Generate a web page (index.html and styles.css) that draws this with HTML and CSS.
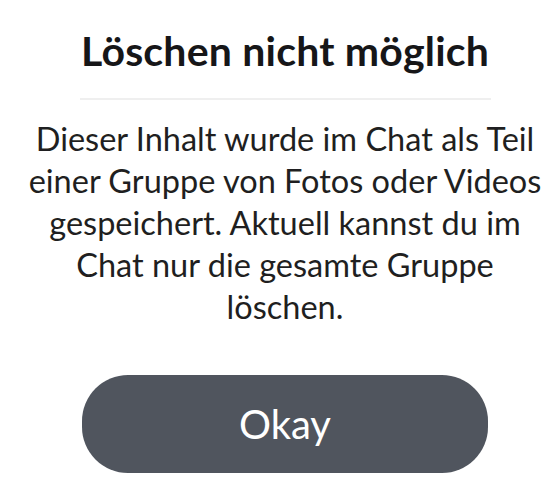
FILE: index.html
```html
<!DOCTYPE html>
<html lang="de">
<head>
    <meta charset="UTF-8">
    <meta name="viewport" content="width=device-width, initial-scale=1.0">
    <title>Löschen nicht möglich</title>
    <link rel="stylesheet" href="styles.css">
</head>
<body>
    <div class="dialog">
        <h1 class="dialog-title">Löschen nicht möglich</h1>
        <div class="divider"></div>
        <p class="dialog-message">
            Dieser Inhalt wurde im Chat als Teil einer Gruppe von Fotos oder Videos gespeichert. Aktuell kannst du im Chat nur die gesamte Gruppe löschen.
        </p>
        <button class="okay-btn">Okay</button>
    </div>
</body>
</html>
```

FILE: styles.css
```css
body {
    margin: 0;
    background: #ffffff;
    font-family: 'Lato', 'Noto Sans', sans-serif;
    color: #1c1c1e;
}

.dialog {
    width: 553px;
    height: 480px;
    box-sizing: border-box;
    padding-left: 17px;
    display: flex;
    flex-direction: column;
    align-items: center;
    overflow: hidden;
}

.dialog-title {
    margin: 25px 0 0;
    font-size: 41px;
    line-height: 52px;
    font-weight: 700;
    letter-spacing: 0.2px;
    color: #161618;
}

.divider {
    width: 411px;
    height: 2px;
    margin-top: 21px;
    background: #efefef;
}

.dialog-message {
    width: 524px;
    margin: 18px 0 0;
    font-size: 32.5px;
    line-height: 42px;
    text-align: center;
    color: #1f1f21;
}

.okay-btn {
    width: 406px;
    height: 98px;
    margin-top: 47px;
    border: none;
    border-radius: 46px;
    background: #50555e;
    color: #ffffff;
    font-family: inherit;
    font-size: 40px;
    cursor: pointer;
    flex-shrink: 0;
}
```
